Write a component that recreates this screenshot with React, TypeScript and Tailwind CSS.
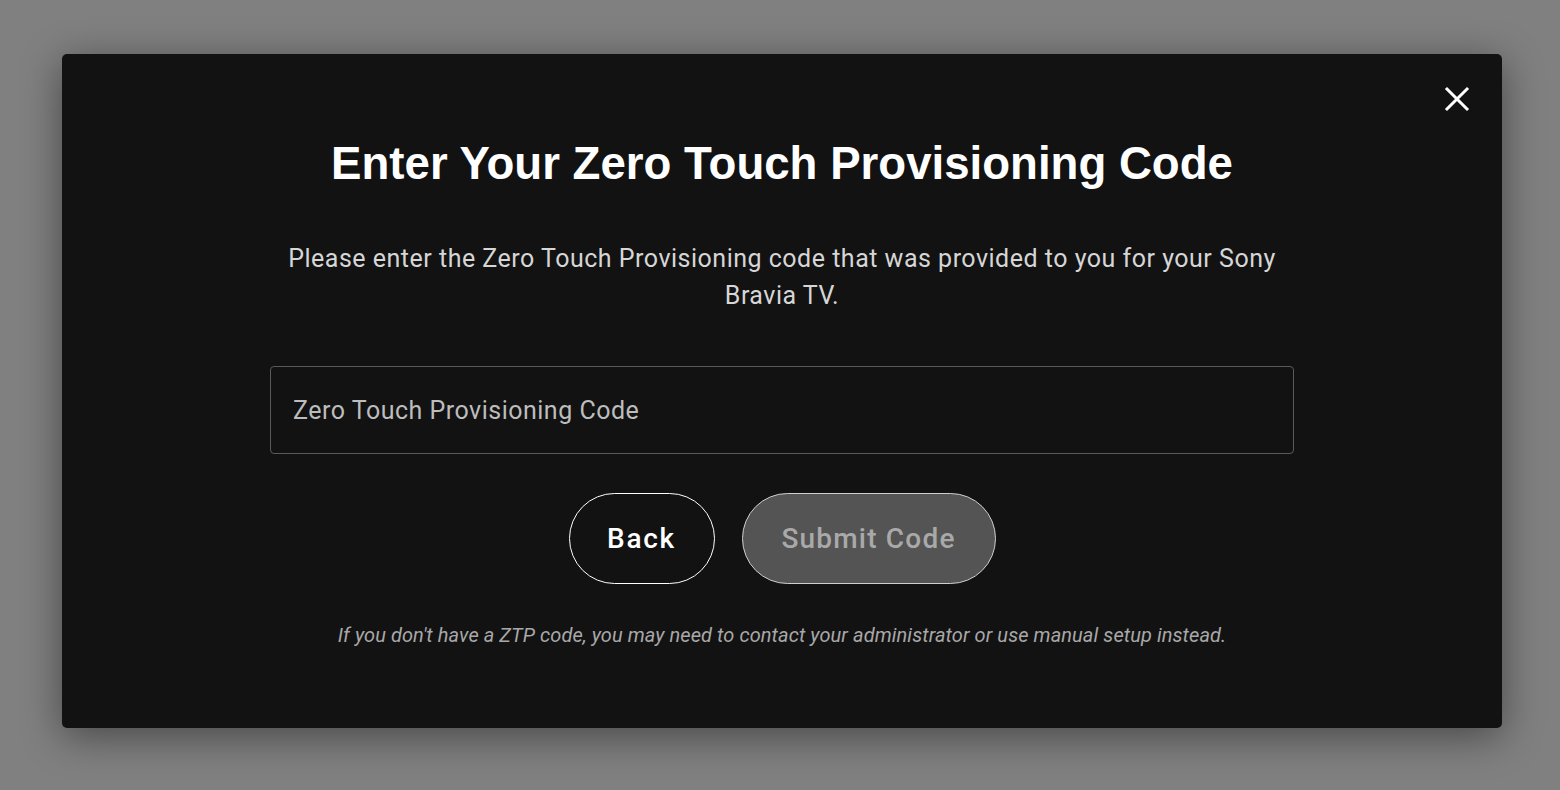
import React, { useState } from "react";

const CloseIcon: React.FC = () => (
  <svg width="26" height="26" viewBox="0 0 26 26" fill="none" stroke="white" strokeWidth="3" strokeLinecap="square">
    <path d="M3 3 L23 23 M23 3 L3 23" />
  </svg>
);

const ZtpDialog: React.FC = () => {
  const [code, setCode] = useState("");

  return (
    <div className="relative w-[1440px] h-[674px] bg-[#121212] rounded-[5px] shadow-[0_8px_40px_rgba(0,0,0,0.45)] flex flex-col items-center">
      {/* Close */}
      <button className="absolute right-[32px] top-[32px] w-[26px] h-[26px] flex items-center justify-center">
        <CloseIcon />
      </button>

      <h1
        className="mt-[82px] text-white font-bold text-[45.6px] leading-[56px]"
        style={{ fontFamily: '"Liberation Sans", Arial, sans-serif' }}
      >
        Enter Your Zero Touch Provisioning Code
      </h1>

      <p className="mt-[48px] max-w-[1010px] text-center text-[25px] leading-[37px] tracking-[0.5px] text-[#d6d6d6] font-['Roboto',sans-serif]">
        Please enter the Zero Touch Provisioning code that was provided to you for your Sony Bravia TV.
      </p>

      <input
        value={code}
        onChange={(e) => setCode(e.target.value)}
        placeholder="Zero Touch Provisioning Code"
        className="mt-[52px] w-[1024px] h-[88px] rounded-[4px] border border-[#5a5a5a] bg-transparent px-[22px] text-[25px] tracking-[0.5px] text-white placeholder:text-[#bdbdbd] outline-none font-['Roboto',sans-serif]"
      />

      {/* Actions */}
      <div className="mt-[39px] flex items-center gap-[27px] font-['Roboto',sans-serif]">
        <button className="w-[146px] h-[91px] rounded-full border border-white bg-[#121212] text-white text-[28px] font-medium tracking-[1.7px]">
          Back
        </button>
        <button
          disabled
          className="w-[254px] h-[91px] rounded-full border border-[#cfcfcf] bg-[#545454] text-[#a9a9a9] text-[28px] font-medium tracking-[1.2px]"
        >
          Submit Code
        </button>
      </div>

      <p className="mt-[37px] text-[20px] leading-[28px] italic tracking-[0.08px] text-[#a8a8a8] font-['Roboto',sans-serif]">
        If you don't have a ZTP code, you may need to contact your administrator or use manual setup instead.
      </p>
    </div>
  );
};

export default function App() {
  return (
    <div className="min-h-screen w-full bg-[#808080] pt-[54px] pl-[62px]">
      <ZtpDialog />
    </div>
  );
}
